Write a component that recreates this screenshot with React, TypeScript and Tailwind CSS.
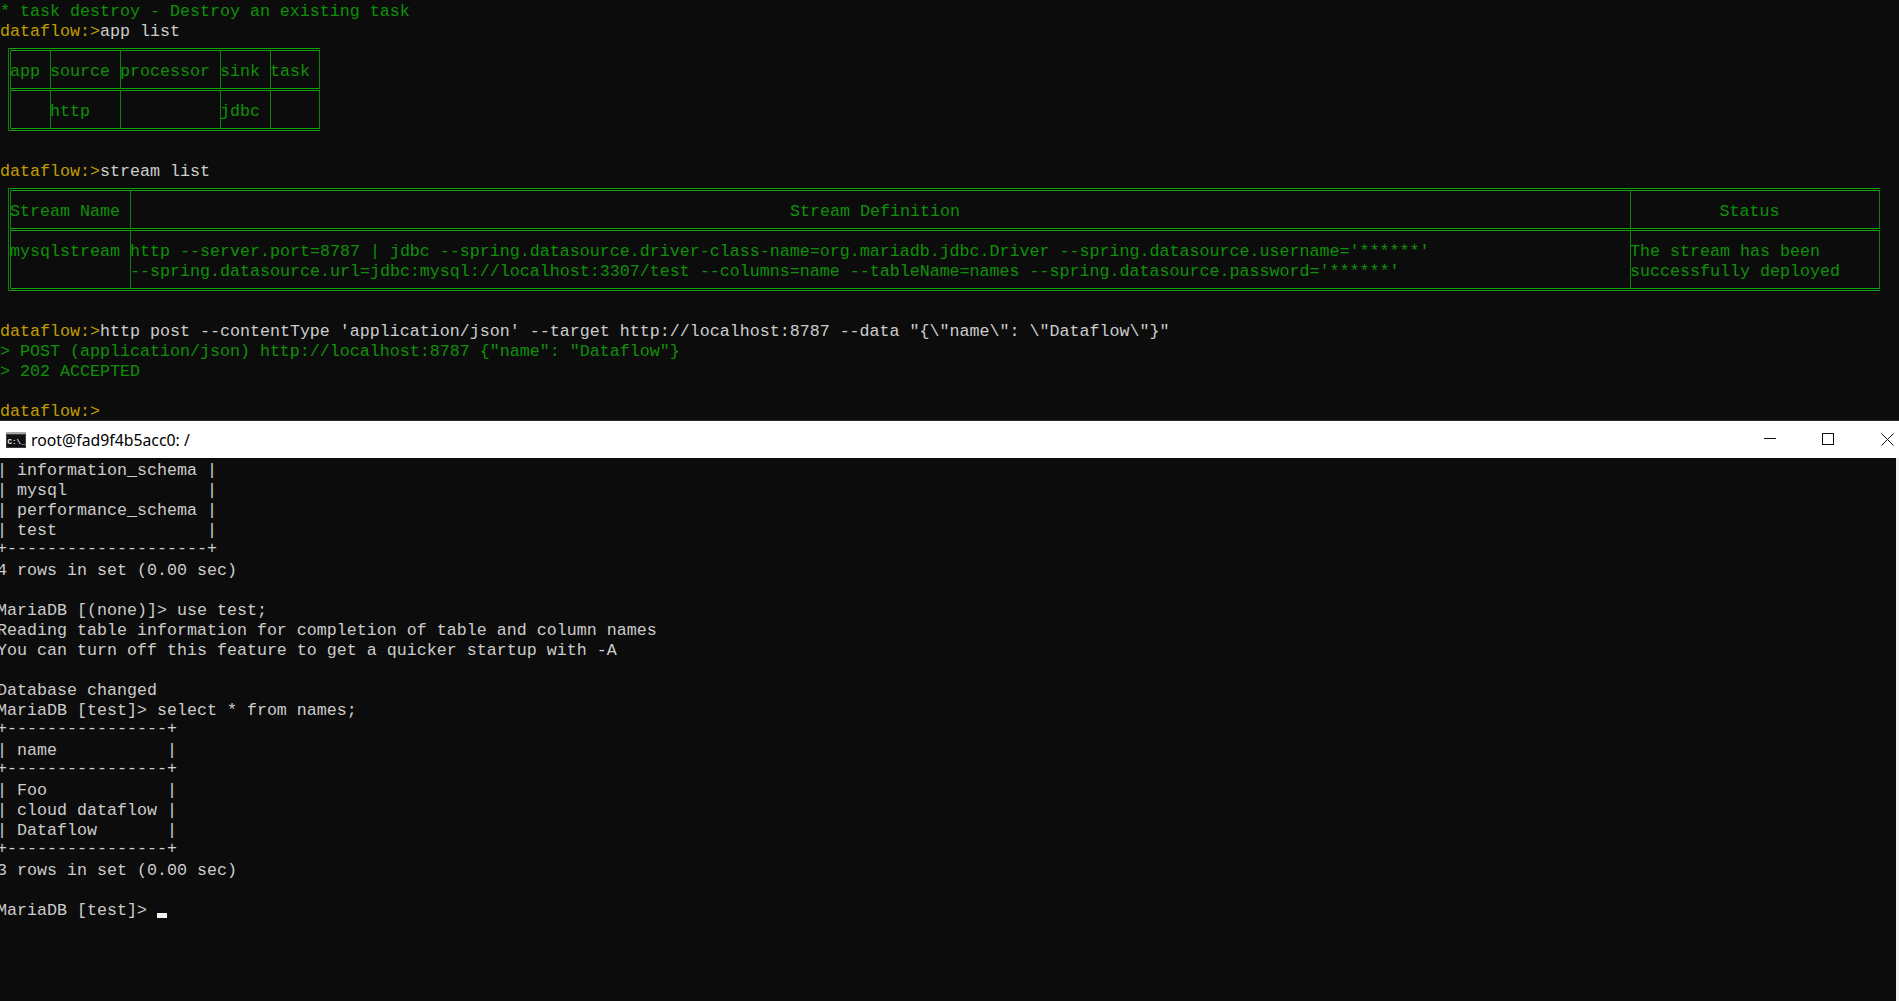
import React from 'react';

const mono = "font-['Liberation_Mono',monospace] text-[16.67px] leading-[22px] whitespace-pre";

const Prompt = ({ label, cmd }: { label: string; cmd?: string }) => (
  <div className="h-[20px]">
    <span className="text-[#c19c00]">{label}</span>
    {cmd && <span>{cmd}</span>}
  </div>
);

const Out = ({ text }: { text?: string }) => (
  <div className="h-[20px] text-[#109009]">{text}</div>
);

const Line = ({ text }: { text?: string }) => <div className="h-[20px]">{text}</div>;

// the +---+ rules sit a little higher in the console font
const Rule = ({ text }: { text: string }) => <div className="h-[20px] -translate-y-[2px]">{text}</div>;

interface Cell {
  width: string;
  lines?: string[];
  center?: boolean;
}

const TableRow = ({ cells, height, last }: { cells: Cell[]; height: string; last?: boolean }) => (
  <div className={`flex ${height} ${last ? '' : 'border-b-[3px] border-double border-[#13a10e]'}`}>
    {cells.map((c, i) => (
      <div key={i} className={`${c.width} pt-[10px] border-r border-[#0f800c] ${c.center ? 'text-center pr-[10px]' : ''}`}>
        {(c.lines || []).map((l, j) => (
          <div key={j} className="h-[20px] -ml-[1px]">{l}</div>
        ))}
      </div>
    ))}
  </div>
);

const AppTable = () => {
  const w = ['w-[40px]', 'w-[70px]', 'w-[100px]', 'w-[50px]', 'w-[49px]'];
  const head = ['app', 'source', 'processor', 'sink', 'task'];
  const body = ['', 'http', '', 'jdbc', ''];
  return (
    <div className="ml-[8px] mt-[7px] mb-[30px] w-fit text-[#109009] border-l-[3px] border-[#0f800c] border-y-[3px] border-double border-y-[#13a10e]">
      <TableRow height="h-[40px]" cells={head.map((t, i) => ({ width: w[i], lines: [t] }))} />
      <TableRow height="h-[37px]" last cells={body.map((t, i) => ({ width: w[i], lines: t ? [t] : [] }))} />
    </div>
  );
};

const StreamTable = () => (
  <div className="ml-[8px] mt-[7px] mb-[30px] w-fit text-[#109009] border-l-[3px] border-[#0f800c] border-y-[3px] border-double border-y-[#13a10e]">
    <TableRow
      height="h-[40px]"
      cells={[
        { width: 'w-[120px]', lines: ['Stream Name'] },
        { width: 'w-[1500px]', lines: ['Stream Definition'], center: true },
        { width: 'w-[249px]', lines: ['Status'], center: true },
      ]}
    />
    <TableRow
      height="h-[57px]"
      last
      cells={[
        { width: 'w-[120px]', lines: ['mysqlstream'] },
        {
          width: 'w-[1500px]',
          lines: [
            "http --server.port=8787 | jdbc --spring.datasource.driver-class-name=org.mariadb.jdbc.Driver --spring.datasource.username='******'",
            "--spring.datasource.url=jdbc:mysql://localhost:3307/test --columns=name --tableName=names --spring.datasource.password='******'",
          ],
        },
        { width: 'w-[249px]', lines: ['The stream has been', 'successfully deployed'] },
      ]}
    />
  </div>
);

const CmdIcon = () => (
  <svg width="20" height="16" viewBox="0 0 20 16">
    <rect width="20" height="16" fill="#3c3c3c" />
    <rect x="0" y="0" width="20" height="2" fill="#a8a8a8" />
    <rect x="1" y="3" width="18" height="12" fill="#111111" />
    <text x="1.5" y="12" fontSize="7.5" fontWeight="700" fontFamily="Liberation Mono" fill="#f0f0f0">C:\_</text>
  </svg>
);

const TitleBar = () => (
  <div className="h-[37px] bg-white flex items-center">
    <div className="ml-[6px] mr-[5px] flex items-center">
      <CmdIcon />
    </div>
    <span className="font-['Noto_Sans',sans-serif] text-[15.8px] leading-[22px] text-black whitespace-pre">root@fad9f4b5acc0: /</span>
    <div className="ml-auto flex items-center">
      <svg width="13" height="13" viewBox="0 0 13 13" className="mr-[45px]">
        <path d="M0 5.5H12" stroke="#111" strokeWidth="1" />
      </svg>
      <svg width="13" height="13" viewBox="0 0 13 13" className="mr-[46px]">
        <rect x="0.5" y="0.5" width="11" height="11" fill="none" stroke="#111" strokeWidth="1" />
      </svg>
      <svg width="13" height="13" viewBox="0 0 13 13" className="mr-[5px]">
        <path d="M0.5 0.5L12.5 12.5M12.5 0.5L0.5 12.5" stroke="#111" strokeWidth="1" />
      </svg>
    </div>
  </div>
);

export default function App() {
  return (
    <div className={`h-[1001px] w-[1899px] overflow-hidden bg-[#0c0c0c] text-[#cccccc] ${mono}`}>
      <div className="h-[420px] pt-[1px] overflow-hidden">
        <Out text="* task destroy - Destroy an existing task" />
        <Prompt label="dataflow:>" cmd="app list" />
        <AppTable />
        <Prompt label="dataflow:>" cmd="stream list" />
        <StreamTable />
        <Prompt label="dataflow:>" cmd={`http post --contentType 'application/json' --target http://localhost:8787 --data "{\\"name\\": \\"Dataflow\\"}"`} />
        <Out text={`> POST (application/json) http://localhost:8787 {"name": "Dataflow"}`} />
        <Out text="> 202 ACCEPTED" />
        <Out />
        <Prompt label="dataflow:>" />
      </div>
      <div className="h-[1px] bg-[#2a2a2a]" />
      <TitleBar />
      <div className="flex h-[543px]">
        <div className="flex-1 pt-[2px] overflow-hidden">
          <div className="-ml-[3px]">
            <Line text="| information_schema |" />
            <Line text="| mysql              |" />
            <Line text="| performance_schema |" />
            <Line text="| test               |" />
            <Rule text="+--------------------+" />
            <Line text="4 rows in set (0.00 sec)" />
            <Line />
            <Line text="MariaDB [(none)]> use test;" />
            <Line text="Reading table information for completion of table and column names" />
            <Line text="You can turn off this feature to get a quicker startup with -A" />
            <Line />
            <Line text="Database changed" />
            <Line text="MariaDB [test]> select * from names;" />
            <Rule text="+----------------+" />
            <Line text="| name           |" />
            <Rule text="+----------------+" />
            <Line text="| Foo            |" />
            <Line text="| cloud dataflow |" />
            <Line text="| Dataflow       |" />
            <Rule text="+----------------+" />
            <Line text="3 rows in set (0.00 sec)" />
            <Line />
            <div className="h-[20px] flex">
              <span>MariaDB [test]&gt; </span>
              <span className="w-[10px] h-[5px] mt-[13px] bg-[#f2f2f2]" />
            </div>
          </div>
        </div>
        <div className="w-[3px] bg-[#f0f0f0]" />
      </div>
    </div>
  );
}
